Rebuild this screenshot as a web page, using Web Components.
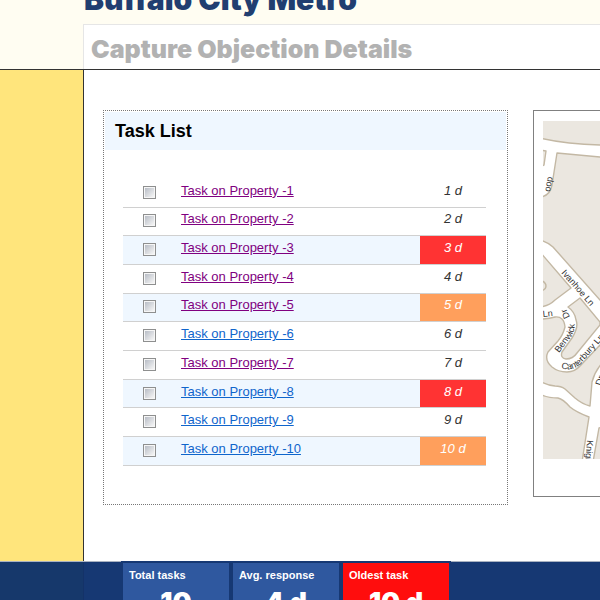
<!DOCTYPE html>
<html lang="en">
<head>
<meta charset="utf-8">
<title>Capture Objection Details</title>
<style>
html, body { height: 100%; margin: 0; }
body { font-family: "Liberation Sans", Arial, sans-serif; font-size: 12px; color: #333; background: #fff; overflow: hidden; }
</style>
</head>
<body>
<objection-page>
  <page-header slot="header" page-title="Capture Objection Details">Buffalo City Metro</page-header>
  <task-panel heading="Task List">
    <task-table></task-table>
  </task-panel>
  <map-frame></map-frame>
  <stat-bar slot="footer">
    <stat-card label="Total tasks">10</stat-card>
    <stat-card label="Avg. response">4 d</stat-card>
    <stat-card label="Oldest task" alert>10 d</stat-card>
  </stat-bar>
</objection-page>

<script>
const define = (name, html, setup) => customElements.define(name, class extends HTMLElement {
  constructor() {
    super();
    this.attachShadow({ mode: "open" }).innerHTML = html;
  }
  connectedCallback() { if (setup) setup(this, this.shadowRoot); }
});

define("objection-page", `
<style>
:host { display: flex; flex-direction: column; height: 100%; overflow: hidden; }
.body { flex: 1; min-height: 0; display: flex; }
.side { flex: none; width: 83px; background: #ffe57c; border-right: 1px solid #333; }
main { flex: 1; min-width: 0; overflow: hidden; padding: 40px 19px 0; display: grid;
  grid-template-columns: minmax(405px, 1fr) minmax(320px, 1fr); column-gap: 25px; align-items: start; }
</style>
<slot name="header"></slot>
<div class="body"><div class="side"></div><main><slot></slot></main></div>
<slot name="footer"></slot>`);

define("page-header", `
<style>
:host { display: flex; flex-direction: column; justify-content: flex-end; flex: none; height: 69px;
  background: #fffdf2; border-bottom: 1px solid #333; padding-left: 83px; overflow: hidden;
  font-family: "Arial Black", Inter, sans-serif; font-weight: 900; }
.brand { font-size: 30px; line-height: 36px; color: #213e70; margin-bottom: 7px; padding-left: 1px; white-space: nowrap; }
h1 { margin: 0; font-size: 25px; line-height: 40px; font-weight: 900; color: #b2b2b2; background: #fff;
  border: solid #e6e6e6; border-width: 1px 0 0 1px; padding: 4px 0 0 7px; white-space: nowrap; }
</style>
<div class="brand"><slot></slot></div>
<h1></h1>`, (el, root) => {
  root.querySelector("h1").textContent = el.getAttribute("page-title");
});

define("task-panel", `
<style>
:host { display: block; border: 1px dotted #777; padding: 1px 1px 38px 1px; }
h2 { margin: 0 0 29px; background: #eff7ff; color: #000; font-size: 18px; line-height: 38px; padding-left: 10px; }
.content { padding: 0 20px 0 18px; }
</style>
<h2></h2>
<div class="content"><slot></slot></div>`, (el, root) => {
  root.querySelector("h2").textContent = el.getAttribute("heading");
});

define("task-table", `
<style>
:host { display: block; }
table { width: 100%; height: 287px; table-layout: fixed; border-collapse: collapse; }
td { padding: 0; border-bottom: 1px solid #d0d0d0; vertical-align: middle; line-height: 16px; }
.pick { width: 58px; }
.pick label { display: flex; padding: 0 0 1px 20px; }
.age { width: 66px; text-align: center; font-style: italic; font-size: 13px; padding-bottom: 4px; }
.name { padding-bottom: 4px; }
a { color: #0f65cc; text-decoration: underline; font-size: 13px; }
a.seen { color: #800080; }
tr.tint { background: #eff7ff; }
.late { background: #f33; color: #fff; }
.due { background: #ff9f5c; color: #fff; }
input { appearance: none; margin: 0; width: 13px; height: 13px; border: 1px solid #8e8f8f; padding: 1px;
  background: linear-gradient(135deg, #b8bdc6, #f6f6f6) content-box, #f6f6f6; }
</style>
<table><tbody></tbody></table>`, (el, root) => {
  const status = { 3: "late", 5: "due", 8: "late", 10: "due" };
  const unseen = [6, 8, 9, 10];
  let rows = "";
  for (let i = 1; i <= 10; i++) {
    rows += `<tr class="${status[i] ? "tint" : ""}">
      <td class="pick"><label><input type="checkbox" aria-label="Select Task on Property -${i}"></label></td>
      <td class="name"><a href="#task-${i}" class="${unseen.includes(i) ? "" : "seen"}">Task on Property -${i}</a></td>
      <td class="age ${status[i] || ""}">${i} d</td></tr>`;
  }
  root.querySelector("tbody").innerHTML = rows;
});

define("map-frame", `
<style>
:host { display: block; border: 1px solid #808080; padding: 10px 9px 37px; }
svg { display: block; width: 100%; height: 338px; background: #fff; }
.block { fill: #ebe7e0; stroke: #c3b8a4; stroke-width: 1.4; stroke-linejoin: round; }
text { font-family: "Liberation Sans", Arial, sans-serif; font-size: 9px; fill: #333; }
</style>
<svg role="img" aria-label="Street map">
<defs>
  <path id="canterbury" d="M561 368 Q571 372 580 365 L607 334"/>
  <path id="benwick" d="M559 353 L571 337 Q577 327 573 319"/>
</defs>
<g transform="translate(-543 -121)">
  <g class="block">
    <path d="M540 118 H900 V152 Q700 149 600 145 Q565 144 540 138Z"/>
    <path d="M540 150 L546 151 L544 165 L540 167Z"/>
    <path d="M557 153 Q578 155 600 157 L900 170 V600 L600 300 L553 247 Q548 242 540 240 V197 Q550 196 552 185Z"/>
    <path d="M540 252 L571 288 L555 300 Q549 306 540 307Z"/>
    <path d="M580 298 L568 307 Q575 312 576 320 Q579 327 572 338 L562 352 Q560 358 566 359 Q573 359 577 353 L600 325 V322Z"/>
    <path d="M540 319 Q549 319 555 317 Q564 316 565 327 Q563 335 558 341 L548 352 Q544 360 552 367 Q558 372 567 372 Q575 372 581 365 L600 345 L605 360 Q595 370 592 382 L590 406 Q582 404 575 398 L565 389 Q561 386 555 386 Q546 385 540 381Z"/>
    <path d="M540 394 Q547 398 558 398 Q563 399 570 407 Q576 412 589 417 L582 462 H540Z"/>
    <path d="M604 427 L599 428 L593 462 H900 V427Z"/>
    <path d="M540 280 Q546 282 546 286 Q546 290 540 291Z"/>
  </g>
  <text transform="translate(550 192) rotate(-80)">oop</text>
  <text transform="translate(561 273) rotate(49)">Ivanhoe Ln</text>
  <text transform="translate(543 317) rotate(-6)">Ln</text>
  <text transform="translate(570 317) rotate(-115)">Dr</text>
  <text><textPath href="#benwick">Benwick</textPath></text>
  <text><textPath href="#canterbury">Canterbury Ln</textPath></text>
  <text transform="translate(601 386) rotate(-72)">Dr</text>
  <text transform="translate(587 440) rotate(94)">Knights</text>
</g>
</svg>`);

define("stat-bar", `
<style>
:host { display: flex; flex: none; height: 39px; background: #163873; }
.lead, .tail { border-top: 1px solid #a9b2c1; box-sizing: border-box; }
.lead { width: 121px; background: linear-gradient(90deg, #16386b 83px, #143268 83px, #143268 84px, #163873 84px); }
.tail { flex: 1; }
.cards { display: flex; gap: 4px; padding: 2px 2px 0; overflow: hidden; }
</style>
<div class="lead"></div><div class="cards"><slot></slot></div><div class="tail"></div>`);

define("stat-card", `
<style>
:host { display: block; box-sizing: border-box; width: 106px; padding: 4px 6px 0; background: #2f589f; color: #fff; }
:host([alert]) { background: #ff0d0d; }
.label { font-size: 11px; line-height: 16px; font-weight: bold; white-space: nowrap; }
.value { font-family: "Arial Black", Inter, sans-serif; font-weight: 900; font-size: 27px; line-height: 40px; text-align: center; }
</style>
<div class="label"></div>
<div class="value"><slot></slot></div>`, (el, root) => {
  root.querySelector(".label").textContent = el.getAttribute("label");
});
</script>
</body>
</html>
